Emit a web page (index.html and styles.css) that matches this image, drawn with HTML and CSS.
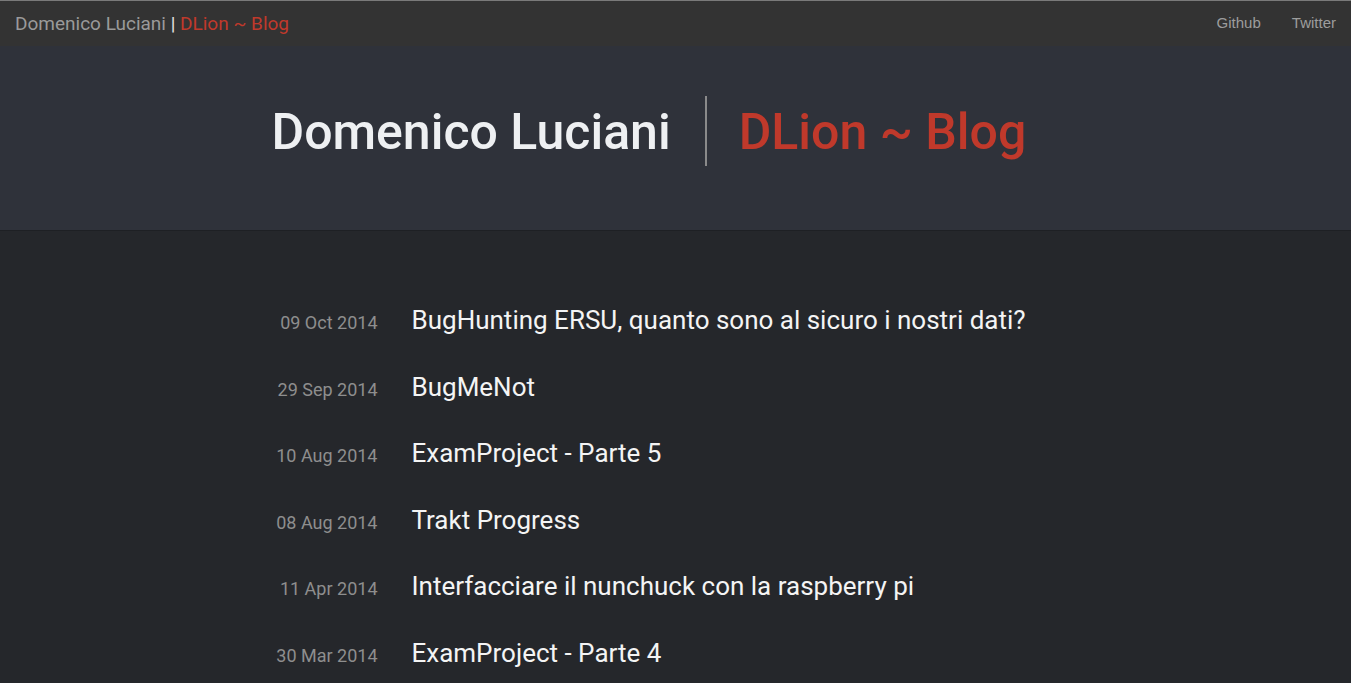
FILE: index.html
```html
<!DOCTYPE html>
<html lang="it">
<head>
<meta charset="utf-8">
<title>DLion ~ Blog</title>
<link rel="stylesheet" href="styles.css">
</head>
<body>
<nav class="topbar">
  <a class="brand" href="#"><span class="brand-name">Domenico Luciani</span> <span class="brand-sep">|</span> <span class="brand-blog">DLion ~ Blog</span></a>
  <ul class="links">
    <li><a href="#">Github</a></li>
    <li><a href="#">Twitter</a></li>
  </ul>
</nav>
<header class="hero">
  <div class="hero-inner">
    <h1 class="hero-name">Domenico Luciani</h1>
    <span class="hero-divider"></span>
    <h2 class="hero-blog">DLion ~ Blog</h2>
  </div>
</header>
<main class="posts">
  <ul class="post-list">
    <li class="post"><span class="date">09 Oct 2014</span><a class="title" href="#">BugHunting ERSU, quanto sono al sicuro i nostri dati?</a></li>
    <li class="post"><span class="date">29 Sep 2014</span><a class="title" href="#">BugMeNot</a></li>
    <li class="post"><span class="date">10 Aug 2014</span><a class="title" href="#">ExamProject - Parte 5</a></li>
    <li class="post"><span class="date">08 Aug 2014</span><a class="title" href="#">Trakt Progress</a></li>
    <li class="post"><span class="date">11 Apr 2014</span><a class="title" href="#">Interfacciare il nunchuck con la raspberry pi</a></li>
    <li class="post"><span class="date">30 Mar 2014</span><a class="title" href="#">ExamProject - Parte 4</a></li>
  </ul>
</main>
</body>
</html>
```
FILE: styles.css
```css
* { box-sizing: border-box; }
html, body { margin: 0; padding: 0; }
body {
  background: #25272b;
  font-family: Roboto, "Liberation Sans", sans-serif;
  color: #fff;
  overflow: hidden;
}
a { text-decoration: none; }

.topbar {
  height: 46px;
  background: #333333;
  border-top: 1px solid #7a7a7a;
  display: flex;
  align-items: center;
  justify-content: space-between;
  padding: 0 15px;
}
.brand {
  font-family: Roboto, sans-serif;
  font-size: 19px;
  color: #9a9a9a;
  white-space: nowrap;
  margin-top: -1px;
}
.brand-sep { color: #e6e6e6; }
.brand-blog { color: #c0392b; }
.links {
  list-style: none;
  margin: 0;
  padding: 0;
  display: flex;
  gap: 31px;
  margin-top: -2px;
}
.links a {
  font-family: "Liberation Sans", Arial, sans-serif;
  font-size: 15px;
  color: #9d9d9d;
}

.hero {
  height: 185px;
  background: #2f323a;
  border-bottom: 1px solid #1e2024;
}
.hero-inner {
  width: 810px;
  margin: 0 auto;
  display: flex;
  align-items: center;
  padding-top: 49px;
  padding-left: 1px;
}
.hero-name, .hero-blog {
  margin: 0;
  font-size: 50px;
  font-weight: 500;
  line-height: 70px;
}
.hero-name { color: #eef0f2; padding-top: 2px; }
.hero-blog { color: #c0392b; padding-top: 2px; }
.hero-divider {
  width: 2px;
  height: 70px;
  background: #8a8a8a;
  margin: 0 32px 0 34px;
}

.posts {
  padding-top: 74px;
}
.post-list {
  list-style: none;
  margin: 0 auto;
  padding: 0;
  width: 810px;
}
.post {
  display: flex;
  align-items: baseline;
  height: 66.6px;
}
.date {
  width: 107px;
  text-align: right;
  font-size: 18px;
  color: #8e8e8e;
  flex-shrink: 0;
}
.title {
  margin-left: 34px;
  font-size: 26px;
  color: #f4f4f4;
  white-space: nowrap;
}
```
